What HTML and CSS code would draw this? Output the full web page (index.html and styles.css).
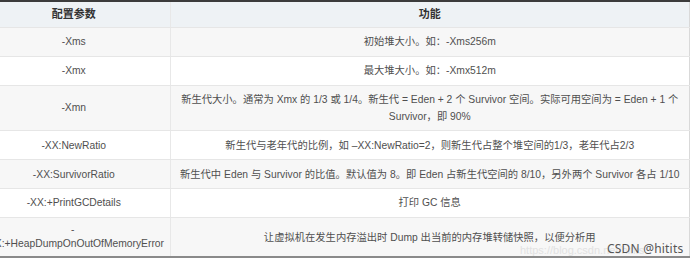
FILE: index.html
```html
<!DOCTYPE html>
<html lang="zh-CN">
<head>
<meta charset="utf-8">
<title>JVM 参数</title>
<link rel="stylesheet" href="styles.css">
</head>
<body>
<div class="frame">
  <table class="params">
    <colgroup><col class="col1"><col class="col2"></colgroup>
    <thead>
      <tr><th>配置参数</th><th>功能</th></tr>
    </thead>
    <tbody>
      <tr><td>-Xms</td><td>初始堆大小。如：-Xms256m</td></tr>
      <tr><td>-Xmx</td><td>最大堆大小。如：-Xmx512m</td></tr>
      <tr><td>-Xmn</td><td>新生代大小。通常为 Xmx 的 1/3 或 1/4。新生代 = Eden + 2 个 Survivor 空间。实际可用空间为 = Eden + 1 个 Survivor，即 90%</td></tr>
      <tr><td>-XX:NewRatio</td><td>新生代与老年代的比例，如 –XX:NewRatio=2，则新生代占整个堆空间的1/3，老年代占2/3</td></tr>
      <tr><td>-XX:SurvivorRatio</td><td class="nowrap">新生代中 Eden 与 Survivor 的比值。默认值为 8。即 Eden 占新生代空间的 8/10，另外两个 Survivor 各占 1/10</td></tr>
      <tr><td>-XX:+PrintGCDetails</td><td>打印 GC 信息</td></tr>
      <tr><td class="long"><span class="dash">-</span><span class="word">XX:+HeapDumpOnOutOfMemoryError</span></td><td>让虚拟机在发生内存溢出时 Dump 出当前的内存堆转储快照，以便分析用</td></tr>
    </tbody>
  </table>
  <div class="mark"><span class="url">https://blog.csdn.net/hitits</span><span class="sig">CSDN @hitits</span></div>
</div>
</body>
</html>
```

FILE: styles.css
```css
html, body {
  margin: 0;
  padding: 0;
  background: #ffffff;
}

body {
  font-family: "Liberation Sans", "Noto Sans CJK SC", sans-serif;
  font-size: 10.3px;
  color: #4f4f4f;
  width: 691px;
  height: 260px;
  overflow: hidden;
}

.frame {
  position: relative;
  width: 690px;
  border-top: 2px solid #3c3c3c;
}

.params {
  margin-left: -22px;
  width: 712px;
  border-collapse: collapse;
  table-layout: fixed;
  border-right: 1px solid #d9d9d9;
  border-bottom: 2px solid #8a8a8a;
}

.params .col1 { width: 192px; }

.params th,
.params td {
  box-sizing: border-box;
  text-align: center;
  line-height: 17px;
  padding: 5.4px 6px;
  border-bottom: 1px solid #e6e6e6;
  border-left: 1px solid #e8e8e8;
  vertical-align: middle;
}

.params th:first-child,
.params td:first-child {
  border-left: none;
}

.params thead th {
  background: #eef2f5;
  color: #333333;
  font-size: 11px;
  font-weight: bold;
  padding-top: 4px;
  padding-bottom: 4px;
}

.params tbody tr:nth-child(odd) td { background: #f7f7f7; }
.params tbody tr:nth-child(even) td { background: #ffffff; }
.params tbody tr:last-child td { border-bottom: none; }

.params td.nowrap { white-space: nowrap; }

.params td.long {
  line-height: 14px;
  padding-left: 10px;
  padding-right: 0;
}

.long .dash { display: block; text-align: center; padding-right: 12px; }
.long .word { display: block; white-space: nowrap; text-align: left; }

.mark {
  position: absolute;
  left: 520px;
  top: 233px;
  height: 24px;
}

.mark .url {
  position: absolute;
  left: 0;
  top: 9px;
  font-size: 11px;
  color: #e2e2e2;
  white-space: nowrap;
}

.mark .sig {
  position: absolute;
  left: 87px;
  top: 5px;
  font-family: "Noto Sans", "Liberation Sans", sans-serif;
  font-size: 12px;
  color: #555555;
  white-space: nowrap;
  letter-spacing: 0.2px;
}
```
